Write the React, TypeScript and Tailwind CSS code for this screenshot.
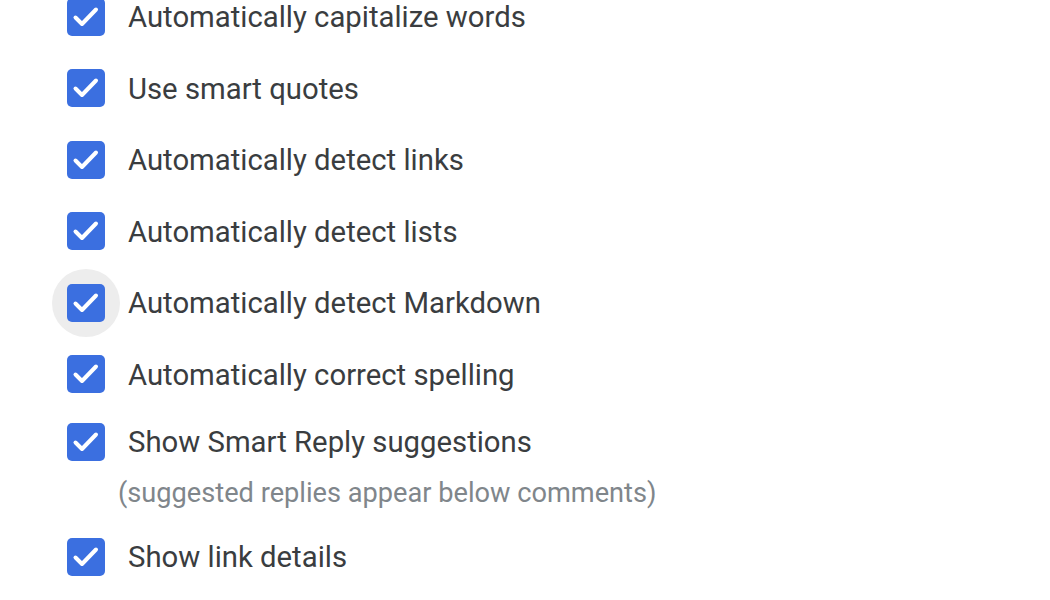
import React from "react";

const Check = () => (
  <div className="w-[38px] h-[38px] rounded-[5px] bg-[#3b6fe0] shrink-0">
    <svg width="38" height="38" viewBox="0 0 38 38" fill="none">
      <path d="M8.5 19.5l6.5 6.5L29 11.5" stroke="#ffffff" strokeWidth="4" strokeLinecap="round" strokeLinejoin="round" />
    </svg>
  </div>
);

const Row = ({ label, hover = false }: { label: string; hover?: boolean }) => (
  <div className="h-[71.5px] flex items-center">
    <div className="relative w-[38px] h-[38px] ml-[67px]">
      {hover && (
        <div className="absolute left-[-15px] top-[-15px] w-[68px] h-[68px] rounded-full bg-[#ededed]" />
      )}
      <div className="relative">
        <Check />
      </div>
    </div>
    <span className="ml-[23px] pt-[2px] text-[29.3px] text-[#3a3d40] leading-none">{label}</span>
  </div>
);

export default function App() {
  return (
    <div
      className="w-[1050px] h-[600px] bg-white overflow-hidden"
      style={{ fontFamily: "Roboto, 'Liberation Sans', sans-serif" }}
    >
      <div className="mt-[-19px] flex flex-col">
        <Row label="Automatically capitalize words" />
        <Row label="Use smart quotes" />
        <Row label="Automatically detect links" />
        <Row label="Automatically detect lists" />
        <Row label="Automatically detect Markdown" hover />
        <Row label="Automatically correct spelling" />
        <div className="h-[63px] flex items-center">
          <div className="ml-[67px]">
            <Check />
          </div>
          <span className="ml-[23px] pt-[2px] text-[29.3px] text-[#3a3d40] leading-none">Show Smart Reply suggestions</span>
        </div>
        <div className="h-[40px] flex items-center">
          <span className="ml-[118px] pt-[2px] text-[27.2px] text-[#80868b] leading-none">(suggested replies appear below comments)</span>
        </div>
        <div className="h-[88px] flex items-center">
          <div className="ml-[67px]">
            <Check />
          </div>
          <span className="ml-[23px] pt-[2px] text-[29.3px] text-[#3a3d40] leading-none">Show link details</span>
        </div>
      </div>
    </div>
  );
}
